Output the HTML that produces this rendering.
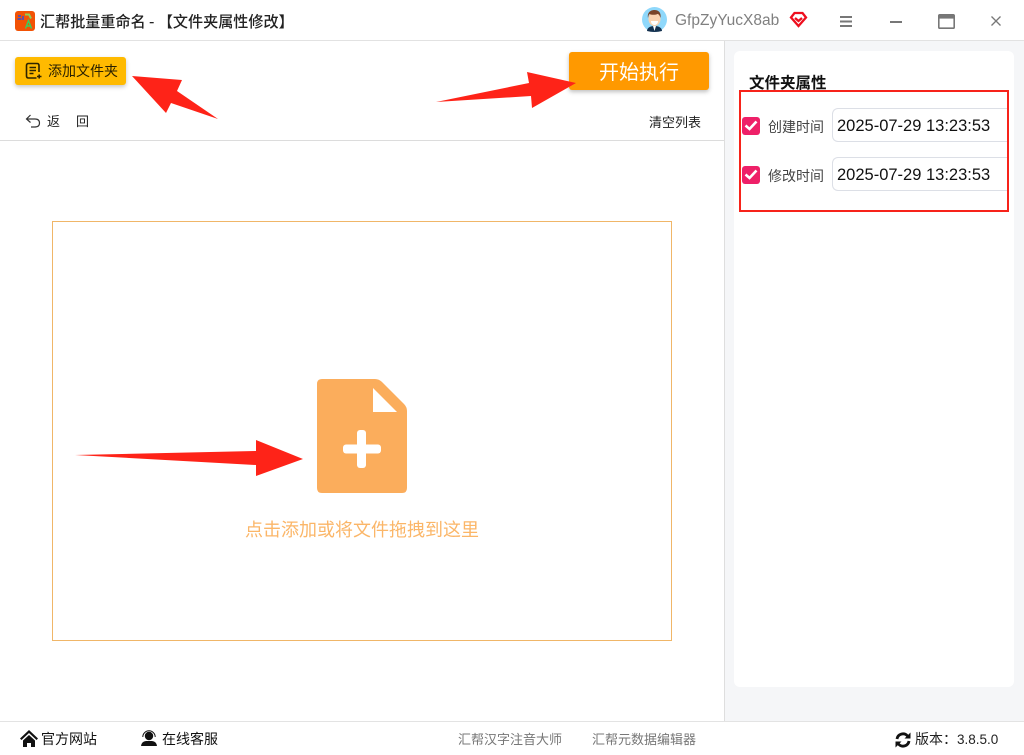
<!DOCTYPE html>
<html lang="zh"><head><meta charset="utf-8"><title>汇帮批量重命名</title>
<style>
*{box-sizing:border-box}
html,body{margin:0;padding:0;width:1024px;height:755px;overflow:hidden;background:#fff}
body{position:relative;font-family:"Liberation Sans","Noto Sans CJK SC",sans-serif;color:#222}
.a{position:absolute;white-space:nowrap;line-height:1}
.cjk{font-family:"Noto Sans CJK SC","Liberation Sans",sans-serif}
svg{position:absolute;display:block}
.inp{position:absolute;left:832px;width:175px;height:34px;border:1px solid #dcdfe6;border-right:0;border-radius:6px 0 0 6px;background:#fff;font-size:16.500px;line-height:35px;padding-left:4px;color:#111;white-space:nowrap;overflow:hidden}
.chk{position:absolute;left:742px;width:18px;height:18px;background:#ee2068;border-radius:3px}
</style></head><body>

<!-- title bar -->
<svg style="left:15px;top:11px" width="20" height="20" viewBox="0 0 20 20">
<rect width="20" height="20" rx="3" fill="#f25205"/>
<path d="M3 5h3M2.500 8h4M8 5v4" stroke="#2a4fe0" stroke-width="1.400" fill="none"/>
<path d="M10 3.500h4l2 4" stroke="#8fd05a" stroke-width="2" fill="none"/>
<path d="M10.500 17.500l3-8 3 8M12 15h3" stroke="#38d060" stroke-width="1.400" fill="none"/>
</svg>
<div class="a cjk" style="left:40px;top:14px;font-size:15.100px;font-weight:500;color:#222">汇帮批量重命名 - 【文件夹属性修改】</div>

<svg style="left:642px;top:7px" width="25" height="25" viewBox="0 0 25 25">
<circle cx="12.500" cy="12.500" r="12.500" fill="#8fd8fb"/>
<path d="M5 24c0-3 3-5 7.500-5s7.500 2 7.500 5q-3.500 1-7.500 1T5 24z" fill="#14314f"/>
<path d="M11 19h3l-1.500 5z" fill="#fff"/>
<ellipse cx="12.500" cy="12" rx="6" ry="7" fill="#fbd3b0"/>
<path d="M6 11c-1-6 3-8 6.500-8s7 2 6 8c-1-3-2-4-3-4-2 1-6 1-8 0-1 1-1 2-1.500 4z" fill="#7a4428"/>
<path d="M9 14h7c0 3-2 4-3.500 4S9 17 9 14z" fill="#fff"/>
</svg>
<div class="a" style="left:675px;top:13px;font-size:15.500px;color:#808080">GfpZyYucX8ab</div>
<svg style="left:789px;top:11px" width="19" height="18" viewBox="0 0 19 18">
<path d="M5.500 2h8l3.500 4.500L9.500 15 2 6.500z" fill="none" stroke="#ee0f1e" stroke-width="2.300"/>
<path d="M6 7l3.500 3L13 7" fill="none" stroke="#ee0f1e" stroke-width="2.300"/>
</svg>
<svg style="left:839px;top:15px" width="14" height="13" viewBox="0 0 14 13"><path d="M1 2h12M1 6.500h12M1 11h12" stroke="#777" stroke-width="2"/></svg>
<svg style="left:889px;top:20px" width="14" height="4" viewBox="0 0 14 4"><path d="M1 2h12" stroke="#777" stroke-width="2"/></svg>
<svg style="left:938px;top:14px" width="17" height="15" viewBox="0 0 17 15"><rect x=".8" y=".8" width="15.400" height="13.400" rx="1" fill="none" stroke="#777" stroke-width="1.600"/><rect x=".8" y=".8" width="15.400" height="3.800" fill="#777"/></svg>
<svg style="left:990px;top:15px" width="12" height="12" viewBox="0 0 12 12"><path d="M1.500 1.500l9 9M10.500 1.500l-9 9" stroke="#777" stroke-width="1.300"/></svg>
<div class="a" style="left:0;top:40px;width:1024px;height:1px;background:#e2e2e2"></div>

<!-- toolbar -->
<div class="a" style="left:15px;top:57px;width:111px;height:28px;background:#ffba00;border-radius:3px;box-shadow:0 2px 4px rgba(0,0,0,.22)"></div>
<svg style="left:25px;top:62px" width="18" height="18" viewBox="0 0 18 18" fill="none" stroke="#2e2400" stroke-width="1.600">
<path d="M14 10V3.500Q14 1.500 12 1.500H3.500Q1.500 1.500 1.500 3.500V14q0 2 2 2h8"/>
<path d="M4.500 5.500h6.500M4.500 8.500h6.500M4.500 11.500h4"/><path d="M12 14.500h4.500M14.200 12.500v4"/></svg>
<div class="a cjk" style="left:48px;top:64px;font-size:14px;color:#2b2100">添加文件夹</div>

<div class="a" style="left:569px;top:52px;width:140px;height:38px;background:#ff9900;border-radius:3px;box-shadow:0 2px 4px rgba(0,0,0,.25)"></div>
<div class="a cjk" style="left:599px;top:61px;font-size:20px;color:#fff">开始执行</div>

<svg style="left:25px;top:113px" width="16" height="16" viewBox="0 0 16 16" fill="none" stroke="#333" stroke-width="1.200">
<path d="M5.500 2L1.500 6l4 3.500"/><path d="M1.500 6H10q4.500 0 4.500 4T10 14H6"/></svg>
<div class="a cjk" style="left:47px;top:114px;font-size:13px;color:#222">返</div>
<div class="a cjk" style="left:76px;top:114px;font-size:13px;color:#222">回</div>
<div class="a cjk" style="left:649px;top:115px;font-size:13px;color:#222">清空列表</div>
<div class="a" style="left:0;top:140px;width:725px;height:1px;background:#dcdcdc"></div>

<!-- drop zone -->
<div class="a" style="left:52px;top:221px;width:620px;height:420px;border:1px solid #f0b668"></div>
<svg style="left:317px;top:379px" width="90" height="114" viewBox="0 0 90 114">
<path d="M5 0H58Q62 0 65 3L87 25Q90 28 90 32V109Q90 114 85 114H5Q0 114 0 109V5Q0 0 5 0z" fill="#fbad5c"/>
<path d="M56 9L80 33H56z" fill="#fff"/>
<rect x="40" y="51" width="9" height="38" rx="3" fill="#fff"/>
<rect x="26" y="65.500" width="38" height="9" rx="3" fill="#fff"/>
</svg>
<div class="a cjk" style="left:245px;top:520px;font-size:18px;color:#fbb668">点击添加或将文件拖拽到这里</div>

<!-- right panel -->
<div class="a" style="left:724px;top:41px;width:300px;height:680px;background:#f5f6f8;border-left:1px solid #dedede"></div>
<div class="a" style="left:734px;top:51px;width:280px;height:636px;background:#fff;border-radius:6px"></div>
<div class="a cjk" style="left:749px;top:75px;font-size:15.500px;font-weight:700;color:#111">文件夹属性</div>

<div class="chk" style="top:117px"></div>
<svg style="left:742px;top:117px" width="18" height="18" viewBox="0 0 18 18"><path d="M3.500 8.500l4 3.500L14.500 4.500" fill="none" stroke="#fff" stroke-width="2.600"/></svg>
<div class="a cjk" style="left:768px;top:120px;font-size:14px;color:#444">创建时间</div>
<div class="inp" style="top:108px">2025-07-29 13:23:53</div>

<div class="chk" style="top:166px"></div>
<svg style="left:742px;top:166px" width="18" height="18" viewBox="0 0 18 18"><path d="M3.500 8.500l4 3.500L14.500 4.500" fill="none" stroke="#fff" stroke-width="2.600"/></svg>
<div class="a cjk" style="left:768px;top:169px;font-size:14px;color:#444">修改时间</div>
<div class="inp" style="top:157px">2025-07-29 13:23:53</div>

<div class="a" style="left:739px;top:90px;width:270px;height:122px;border:2px solid #f7231a"></div>

<!-- footer -->
<div class="a" style="left:0;top:721px;width:1024px;height:1px;background:#e3e3e3"></div>
<svg style="left:20px;top:730px" width="18" height="17" viewBox="0 0 18 17">
<path d="M9 0L0 8.500l1.500 1.500L9 3l7.500 7L18 8.500z" fill="#111"/><path d="M3 10.500L9 5l6 5.500V17h-4v-4H7v4H3z" fill="#111"/></svg>
<div class="a cjk" style="left:41px;top:732px;font-size:14px;color:#111">官方网站</div>
<svg style="left:141px;top:730px" width="16" height="16" viewBox="0 0 16 16">
<circle cx="8" cy="6" r="4.200" fill="#111"/><path d="M1.800 7a6.200 6.200 0 0 1 12.400 0" fill="none" stroke="#111" stroke-width="1"/><path d="M0 16q.5-4.500 5-5h6q4.500.5 5 5z" fill="#111"/></svg>
<div class="a cjk" style="left:162px;top:732px;font-size:14px;color:#111">在线客服</div>
<div class="a cjk" style="left:458px;top:732px;font-size:13px;color:#777">汇帮汉字注音大师</div>
<div class="a cjk" style="left:592px;top:732px;font-size:13px;color:#777">汇帮元数据编辑器</div>
<svg style="left:895px;top:732px" width="16" height="16" viewBox="0 0 16 16" fill="none" stroke="#111" stroke-width="2.800">
<path d="M2 7a6 6 0 0 1 10.500-3"/><path d="M14 9a6 6 0 0 1-10.500 3"/><path d="M15.500 .5v6h-6z" fill="#111" stroke="none"/><path d="M.5 15.500v-6h6z" fill="#111" stroke="none"/></svg>
<div class="a cjk" style="left:915px;top:732px;font-size:14px;color:#222">版本：</div>
<div class="a" style="left:957px;top:733px;font-size:13.500px;color:#222">3.8.5.0</div>

<!-- arrows -->
<svg style="left:0;top:0" width="1024" height="755" viewBox="0 0 1024 755">
<path d="M132 76L182 80L177 91L218 119L171 103L166 113z" fill="#fe2318"/>
<path d="M436 102L529 83L527 72L576 83L532 108L531 96z" fill="#fe2318"/>
<path d="M75 455L256 451V440L303 459L256 476V465z" fill="#fe2318"/>
</svg>
</body></html>
